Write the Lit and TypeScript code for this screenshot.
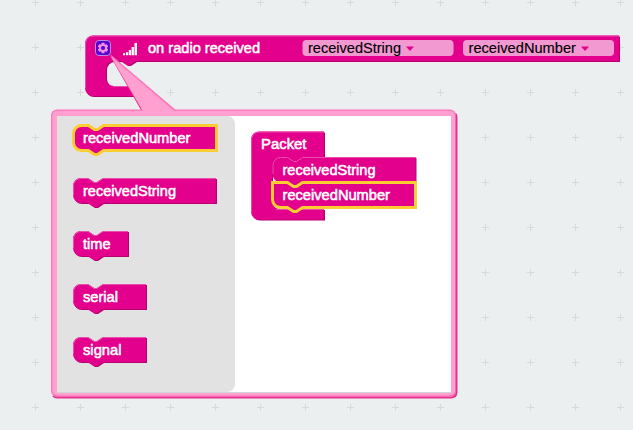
import { LitElement, html, svg, css } from "lit";
import { customElement } from "lit/decorators.js";

interface Item {
  label: string;
  x: number;
  y: number;
  width: number;
  textWidth: number;
  selected?: boolean;
}

const flyout: Item[] = [
  { label: "receivedNumber", x: 73, y: 125, width: 144, textWidth: 107.5, selected: true },
  { label: "receivedString", x: 73, y: 178, width: 144, textWidth: 93 },
  { label: "time", x: 73, y: 231, width: 56, textWidth: 27.5 },
  { label: "serial", x: 73, y: 284, width: 74, textWidth: 35 },
  { label: "signal", x: 73, y: 337, width: 74, textWidth: 38.5 },
];

const stack: Item[] = [
  { label: "receivedString", x: 272.5, y: 157, width: 144, textWidth: 93 },
  { label: "receivedNumber", x: 272.5, y: 182, width: 144, textWidth: 107.5, selected: true },
];

// A statement block: notch on top, matching tab below. Stacked blocks keep a square top-left corner.
const blockPath = (w: number, squareTop: boolean) =>
  `M${squareTop ? "0,0" : "0,8 A8,8 0 0 1 8,0"} H15 l6,4 h3 l6,-4 H${w} v25 H30 l-6,4 h-3 l-6,-4 H8 a8,8 0 0 1 -8,-8 z`;

// A C-shaped block: header, cavity with a notch, and a lower arm.
const cPath = (w: number, inner: number, head: number, cavity: number, arm: number) =>
  `M0,8 A8,8 0 0 1 8,0 H${w} V${head} H51 l-6,4 h-3 l-6,-4 H29 a8,8 0 0 0 -8,8 v${cavity - 16} a8,8 0 0 0 8,8 H${inner} v${arm} H8 a8,8 0 0 1 -8,-8 z`;

@customElement("app-root")
export class AppRoot extends LitElement {
  static styles = css`
    :host {
      display: block;
      width: 633px;
      height: 430px;
      overflow: hidden;
      background: #ebeff0;
    }
    .workspace {
      display: block;
      font-family: "Liberation Sans", Arial, sans-serif;
      font-size: 14.67px;
    }
    .cross { stroke: #d6dadc; stroke-width: 1; fill: none; }
    .fill { fill: #e3008c; }
    .dark { fill: #b60070; }
    .light { fill: none; stroke: #eb4dae; stroke-width: 1; }
    .selected { fill: #e3008c; stroke: #fc3; stroke-width: 3; }
    .label { fill: #fff; stroke: #fff; stroke-width: 0.55; }
    .field { fill: #f399d1; }
    .field-text { fill: #000; stroke: #000; stroke-width: 0.15; }
    .gear-box { fill: #5a00d0; stroke: #b68be0; stroke-width: 1; }
    .gear { fill: #f090dc; }
    .gear-hole { fill: #5a00d0; }
    .bubble { fill: #ffa0d0; }
    .bubble-light { fill: #ff75b6; }
    .bubble-dark { fill: #e5338f; }
    .bubble-mid { fill: #f56aae; }
    .white { fill: #fff; }
    .panel { fill: #e2e2e2; }
    .edge { fill: #d5d5d5; }
  `;

  private text(label: string, x: number, y: number, width: number, cls = "label") {
    return svg`<text class=${cls} x=${x} y=${y} textLength=${width} lengthAdjust="spacingAndGlyphs">${label}</text>`;
  }

  private shape(d: string, x: number, y: number) {
    return svg`<g transform="translate(${x},${y})">
      <path class="dark" d=${d} transform="translate(1,1)"/>
      <path class="fill" d=${d}/>
    </g>`;
  }

  private item(b: Item, stacked = false) {
    const d = blockPath(b.width - 1, stacked);
    return svg`
      ${b.selected
        ? svg`<path class="selected" d=${d} transform="translate(${b.x + (stacked ? 0 : 0.5)},${b.y + 0.5})"/>`
        : svg`${this.shape(d, b.x, b.y)}
          <path class="light" transform="translate(${b.x},${b.y})"
            d="M0.5,17 V8 A7.5,7.5 0 0 1 8,0.5 H15 l6,4 h3 l6,-4 H${b.width - 1}"/>`}
      ${this.text(b.label, b.x + 10, b.y + 18, b.textWidth)}`;
  }

  private field(label: string, x: number, width: number, arrow: number) {
    return svg`
      <rect class="field" x=${x} y="40" width="151" height="16" rx="4"/>
      ${this.text(label, x + 5.5, 53, width, "field-text")}
      <path class="fill" d="M${arrow},46.5 h8 l-4,4.5 z"/>`;
  }

  render() {
    const crosses = [];
    for (let y = 2.5; y < 430; y += 45)
      for (let x = 35.5; x < 633; x += 45)
        crosses.push(svg`<path class="cross" d="M${x - 3.5},${y} h7 M${x},${y - 3.5} v7"/>`);

    return html`<svg class="workspace" width="633" height="430" viewBox="0 0 633 430">
      ${crosses}

      ${this.shape(cPath(534, 53, 25.5, 25, 10), 85, 35.5)}
      <path class="light" d="M85.5,88 V44 A8,8 0 0 1 93,36 H619 M113,86.5 H138"/>
      <rect class="gear-box" x="95.5" y="40.5" width="15" height="15" rx="3.5"/>
      <g transform="translate(103,48)">
        ${[0, 60, 120].map((a) => svg`<rect class="gear" x="-1.5" y="-5.2" width="3" height="10.4" rx="0.5" transform="rotate(${a})"/>`)}
        <circle class="gear" r="4"/>
        <circle class="gear-hole" r="2.1"/>
      </g>
      <path class="white" d="M123,53.200h2.200v2h-2.200z M126,52.200h2.200v3h-2.200z M128.800,50h2.300v5.200h-2.300z M131.600,47h2.300v8.200h-2.300z M134.500,43h2.500v12.200h-2.500z"/>
      ${this.text("on radio received", 148, 53, 112)}
      ${this.field("receivedString", 302.5, 93, 406)}
      ${this.field("receivedNumber", 463, 107.5, 581)}

      <path class="bubble-dark" d="M109,54 L141.500,111 H150 Z"/>
      <path class="bubble-light" d="M110,54 L143,111 H177 Z"/>
      <rect class="bubble-light" x="51" y="109.5" width="405" height="287.5" rx="6"/>
      <path class="bubble-dark" d="M456,113 q1.5,1 1.5,4 V392 q0,6.500 -6.500,6.500 H57 q-3,0 -5,-2.500 H450 q6,0 6,-6 z"/>
      <path class="bubble-mid" d="M455,113 h1 V391 q0,6 -6,6 H57 q-3,0 -4,-1.500 H449 q6,0 6,-6 z"/>
      <rect class="bubble" x="52.3" y="110.8" width="402.700" height="284.700" rx="5"/>
      <path class="bubble" d="M110.500,56 L143.500,112 H175.500 Z"/>
      <rect class="edge" x="57" y="116" width="394" height="277"/>
      <rect class="white" x="57" y="116" width="394" height="276"/>
      <path class="panel" d="M57,116 H227 a8,8 0 0 1 8,8 V384 a8,8 0 0 1 -8,8 H57 z"/>

      ${flyout.map((b) => this.item(b))}

      ${this.shape(cPath(73, 73, 26, 51.5, 10.5), 251, 131.5)}
      <path class="light" d="M251.500,212 V140 A8,8 0 0 1 259,132 H324 M276,209.500 H324"/>
      ${this.text("Packet", 261, 149, 45.5)}
      ${stack.map((b, i) => this.item(b, i > 0))}
    </svg>`;
  }
}
